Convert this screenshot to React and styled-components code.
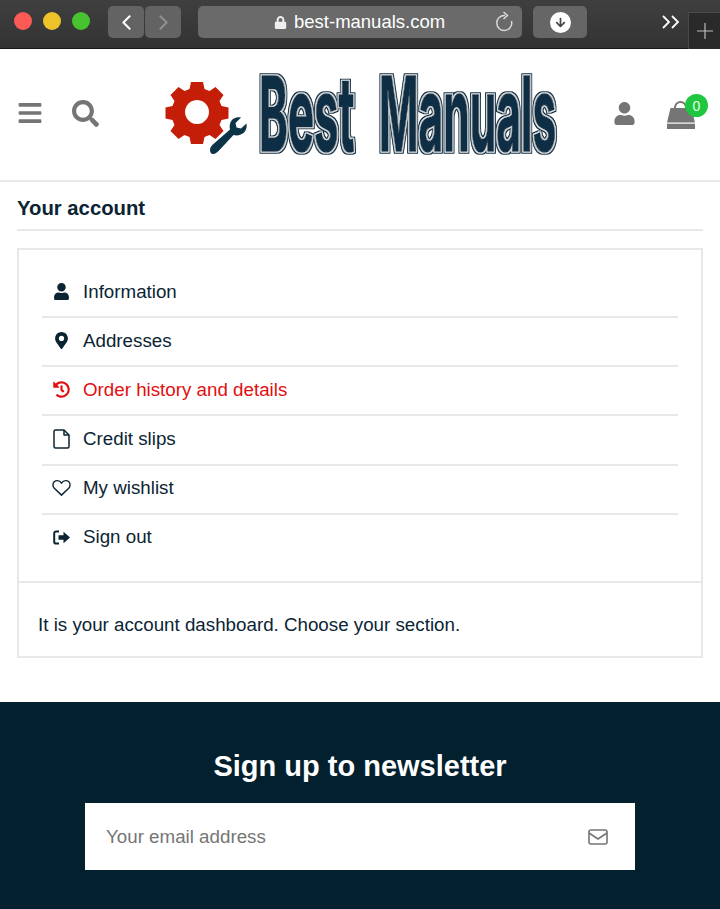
import React from "react";
import styled, { createGlobalStyle } from "styled-components";
import { FaBars, FaSearch, FaUser, FaMapMarkerAlt, FaHistory, FaLock, FaArrowDown } from "react-icons/fa";
import { FiChevronLeft, FiChevronRight } from "react-icons/fi";

const Global = createGlobalStyle`
  html, body { margin: 0; padding: 0; background: #fff; }
  body { font-family: "Liberation Sans", Arial, sans-serif; color: #0b2433; }
  * { box-sizing: border-box; }
`;

const Page = styled.div`width: 720px; height: 909px; overflow: hidden; display: flex; flex-direction: column;`;

const Chrome = styled.div`
  height: 49px; flex: none; display: flex; align-items: flex-start;
  padding: 6px 0 0 14px; border-bottom: 1px solid #17181a;
  background: linear-gradient(#3f3f3f, #333);
`;
const Lights = styled.div`display: flex; gap: 11px; margin: 6px 0 0 0;`;
const Light = styled.span`width: 18px; height: 18px; border-radius: 50%; background: ${p => p.$c};`;
const NavGroup = styled.div`display: flex; gap: 1px; margin-left: 18px;`;
const NavBtn = styled.div`
  width: 36px; height: 32px; border-radius: 5px; background: #636363;
  display: flex; align-items: center; justify-content: center;
  color: ${p => (p.$dim ? "#8f8f8f" : "#fff")}; font-size: 25px;
`;
const UrlBar = styled.div`
  width: 324px; height: 32px; margin-left: 17px; border-radius: 5px; background: #6a6a6a;
  display: flex; align-items: center; position: relative; color: #fff; font-size: 18.5px; padding-left: 76px; gap: 7px;
`;
const LockIcon = styled(FaLock)`font-size: 13px; color: #eee;`;
const Reload = styled.svg`position: absolute; right: 8px; top: 5px;`;
const DownloadBtn = styled.div`
  width: 54px; height: 32px; margin-left: 11px; border-radius: 5px; background: #666;
  display: flex; align-items: center; justify-content: center;
`;
const DownloadDot = styled.span`
  width: 21px; height: 21px; border-radius: 50%; background: #fff; color: #444; font-size: 11px;
  display: flex; align-items: center; justify-content: center;
`;
const Chevrons = styled.svg`margin: 8px 0 0 75px;`;
const NewTab = styled.div`
  width: 32px; height: 37px; margin: 6px 0 0 8px; background: #2a2a2a; border: 1px solid #4a4a4a; border-bottom: 0; border-right: 0;
  display: flex; align-items: center; justify-content: center;
`;

const Header = styled.header`
  height: 133px; flex: none; display: flex; align-items: center; justify-content: space-between;
  padding: 0 24px 3px 17px; border-bottom: 2px solid #e8e8e8; color: #757575;
`;
const HeaderGroup = styled.div`display: flex; align-items: center; gap: ${p => p.$gap}px;`;
const BagWrap = styled.div`position: relative; width: 30px; height: 30px; margin-top: 4px;`;
const Badge = styled.span`
  position: absolute; top: -6px; left: 19px; width: 23px; height: 23px; border-radius: 50%;
  background: #1fc63f; color: #e9ffe9; font-size: 14px; display: flex; align-items: center; justify-content: center;
`;
const LogoSvg = styled.svg`display: block; margin: 4px -8px 0 8px;`;

const Main = styled.main`flex: 1; padding: 0 17px;`;
const Title = styled.h1`
  margin: 0; height: 49px; padding-top: 14px; font-size: 20.3px; line-height: 24px; font-weight: 700;
  color: #0b2433; border-bottom: 2px solid #e8e8e8;
`;
const Card = styled.section`margin-top: 17px; width: 686px; border: 2px solid #e8e8e8;`;
const Menu = styled.ul`margin: 0; padding: 19px 23px 17px; list-style: none; border-bottom: 2px solid #e8e8e8;`;
const MenuRow = styled.li`
  height: 49.15px; display: flex; align-items: center; padding: 0 0 2px 10px; font-size: 18.75px;
  color: ${p => (p.$active ? "#e10f0f" : "#0b2433")};
  border-bottom: 2px solid ${p => (p.$last ? "transparent" : "#e8e8e8")};
`;
const IconSlot = styled.span`width: 31px; display: flex; justify-content: center; padding-right: 12px; font-size: 17px;`;
const Dash = styled.p`margin: 0; padding: 31px 19px 21px; font-size: 18.75px; line-height: 21px; color: #0b2433;`;

const Footer = styled.footer`
  height: 207px; flex: none; background: #03202f; display: flex; flex-direction: column; align-items: center; padding-top: 46px;
`;
const FooterTitle = styled.h2`margin: 0; font-size: 29px; line-height: 36px; font-weight: 700; color: #fff;`;
const Field = styled.div`
  margin-top: 19px; width: 550px; height: 67px; background: #fff; display: flex; align-items: center; justify-content: space-between;
  padding: 0 27px 0 21px; color: #757575; font-size: 18.75px;
`;
const Placeholder = styled.span`padding-top: 1px;`;

const Bag = () => (
  <svg width="30" height="30" viewBox="0 0 30 30">
    <path d="M9 9V7.500a5.500 5.500 0 0 1 11 0V9" fill="none" stroke="#757575" strokeWidth="2" />
    <path d="M4.500 8h21L29 22.500H1z" fill="#757575" />
    <path d="M1 23.700h28V29H1z" fill="#757575" />
  </svg>
);

const Logo = () => (
  <LogoSvg width="402" height="92" viewBox="160 68 402 92">
    <defs>
      <filter id="ring" x="-5%" y="-5%" width="110%" height="110%">
        <feMorphology in="SourceAlpha" operator="dilate" radius="1.4" result="a" />
        <feFlood floodColor="#d5dde1" />
        <feComposite in2="a" operator="in" result="light" />
        <feMorphology in="SourceAlpha" operator="dilate" radius="2.2" result="b" />
        <feFlood floodColor="#0c2c40" />
        <feComposite in2="b" operator="in" result="dark" />
        <feMerge>
          <feMergeNode in="dark" />
          <feMergeNode in="light" />
          <feMergeNode in="SourceGraphic" />
        </feMerge>
      </filter>
    </defs>
    <path fill="#c41e08" fillRule="evenodd" d="M188 81h12l1.500 7 5 2 6-4 8 8-4 6 2 5 7 1.500v11l-7 1.500-2 5 4 6-8 8-6-4-5 2-1.500 7h-12l-1.500-7-5-2-6 4-8-8 4-6-2-5-7-1.500v-11l7-1.500 2-5-4-6 8-8 6 4 5-2zM194 99a12 12 0 1 0 .01 0z" />
    <path d="M207 149c0-3 2-5 4-6.500l16-14c-1-5 .5-9 4-11 2-1 5-1.500 7-1l-5.500 5.500 1 4.500 4.500 1 5.500-5c.5 3 0 6-2 8.500-3 3-7 4-11 3l-14 15c-2 2-4 4-6.500 4-2 0-3-2-3-4z" fill="#0d3349" />
    <g filter="url(#ring)" fill="#0c2f45" stroke="#0c2f45" strokeWidth="1.500" strokeLinejoin="round" fontFamily="Inter, 'Liberation Sans', sans-serif" fontWeight="700" fontSize="103">
      <text transform="translate(256 150) scale(.44 1)" textLength="217" lengthAdjust="spacingAndGlyphs">Best</text>
      <text transform="translate(376 150) scale(.4262 1)" textLength="416" lengthAdjust="spacingAndGlyphs">Manuals</text>
    </g>
  </LogoSvg>
);

const SignOut = () => (
  <svg width="18" height="15" viewBox="0 0 18 15">
    <path d="M6 1.500H3A1.800 1.800 0 0 0 1.200 3.300v8.400A1.800 1.800 0 0 0 3 13.500h3" fill="none" stroke="currentColor" strokeWidth="2" />
    <path d="M5.500 5.300h5V1.800L17 7.500l-6.500 5.700V9.700h-5z" fill="currentColor" />
  </svg>
);

const FileOutline = () => (
  <svg width="17" height="20" viewBox="0 0 17 20" fill="none" stroke="currentColor" strokeWidth="1.500" strokeLinejoin="round">
    <path d="M2.500 1H11l5 5v11.500a1.500 1.500 0 0 1-1.500 1.500h-12A1.500 1.500 0 0 1 1 17.500v-15A1.500 1.500 0 0 1 2.500 1z" />
    <path d="M11 1v5h5" />
  </svg>
);

const HeartOutline = () => (
  <svg width="20" height="18" viewBox="0 0 20 18" fill="none" stroke="currentColor" strokeWidth="1.500" strokeLinejoin="round">
    <path d="M10 16.500L2.400 9.200A4.700 4.700 0 0 1 1 5.900C1 3.200 3 1.200 5.600 1.200c1.800 0 3.400 1 4.400 2.700 1-1.700 2.600-2.700 4.400-2.700C17 1.200 19 3.200 19 5.900c0 1.200-.5 2.400-1.400 3.300z" />
  </svg>
);

const items = [
  ["Information", <FaUser key="i" />],
  ["Addresses", <FaMapMarkerAlt key="a" />],
  ["Order history and details", <FaHistory key="o" />, true],
  ["Credit slips", <FileOutline key="c" />],
  ["My wishlist", <HeartOutline key="w" />],
  ["Sign out", <SignOut key="s" />],
];

export default function App() {
  return (
    <Page>
      <Global />
      <Chrome>
        <Lights>
          <Light $c="#fb5a55" />
          <Light $c="#eec32a" />
          <Light $c="#46c32f" />
        </Lights>
        <NavGroup>
          <NavBtn><FiChevronLeft /></NavBtn>
          <NavBtn $dim><FiChevronRight /></NavBtn>
        </NavGroup>
        <UrlBar>
          <LockIcon />
          best-manuals.com
          <Reload width="20" height="22" viewBox="0 0 20 22" fill="none" stroke="#ddd" strokeWidth="1.400">
            <path d="M11 4.500A7.500 7.500 0 1 0 17.500 10" />
            <path d="M9.500 1l4 3.500-4 3.500" />
          </Reload>
        </UrlBar>
        <DownloadBtn><DownloadDot><FaArrowDown /></DownloadDot></DownloadBtn>
        <Chevrons width="18" height="16" viewBox="0 0 18 16" fill="none" stroke="#fff" strokeWidth="1.800">
          <path d="M1 2l6 6-6 6M10 2l6 6-6 6" />
        </Chevrons>
        <NewTab>
          <svg width="16" height="16" viewBox="0 0 16 16" stroke="#bbb" strokeWidth="1.200"><path d="M8 0v16M0 8h16" /></svg>
        </NewTab>
      </Chrome>
      <Header>
        <HeaderGroup $gap={29}>
          <FaBars size={26} />
          <FaSearch size={27} />
        </HeaderGroup>
        <Logo />
        <HeaderGroup $gap={30}>
          <FaUser size={23} />
          <BagWrap>
            <Bag />
            <Badge>0</Badge>
          </BagWrap>
        </HeaderGroup>
      </Header>
      <Main>
        <Title>Your account</Title>
        <Card>
          <Menu>
            {items.map(([label, icon, active], i) => (
              <MenuRow key={label} $active={active} $last={i === items.length - 1}>
                <IconSlot>{icon}</IconSlot>
                {label}
              </MenuRow>
            ))}
          </Menu>
          <Dash>It is your account dashboard. Choose your section.</Dash>
        </Card>
      </Main>
      <Footer>
        <FooterTitle>Sign up to newsletter</FooterTitle>
        <Field>
          <Placeholder>Your email address</Placeholder>
          <svg width="20" height="16" viewBox="0 0 20 16" fill="none" stroke="#757575" strokeWidth="1.600">
            <rect x="1" y="1" width="18" height="14" rx="2" />
            <path d="M1 4l9 6 9-6" />
          </svg>
        </Field>
      </Footer>
    </Page>
  );
}
